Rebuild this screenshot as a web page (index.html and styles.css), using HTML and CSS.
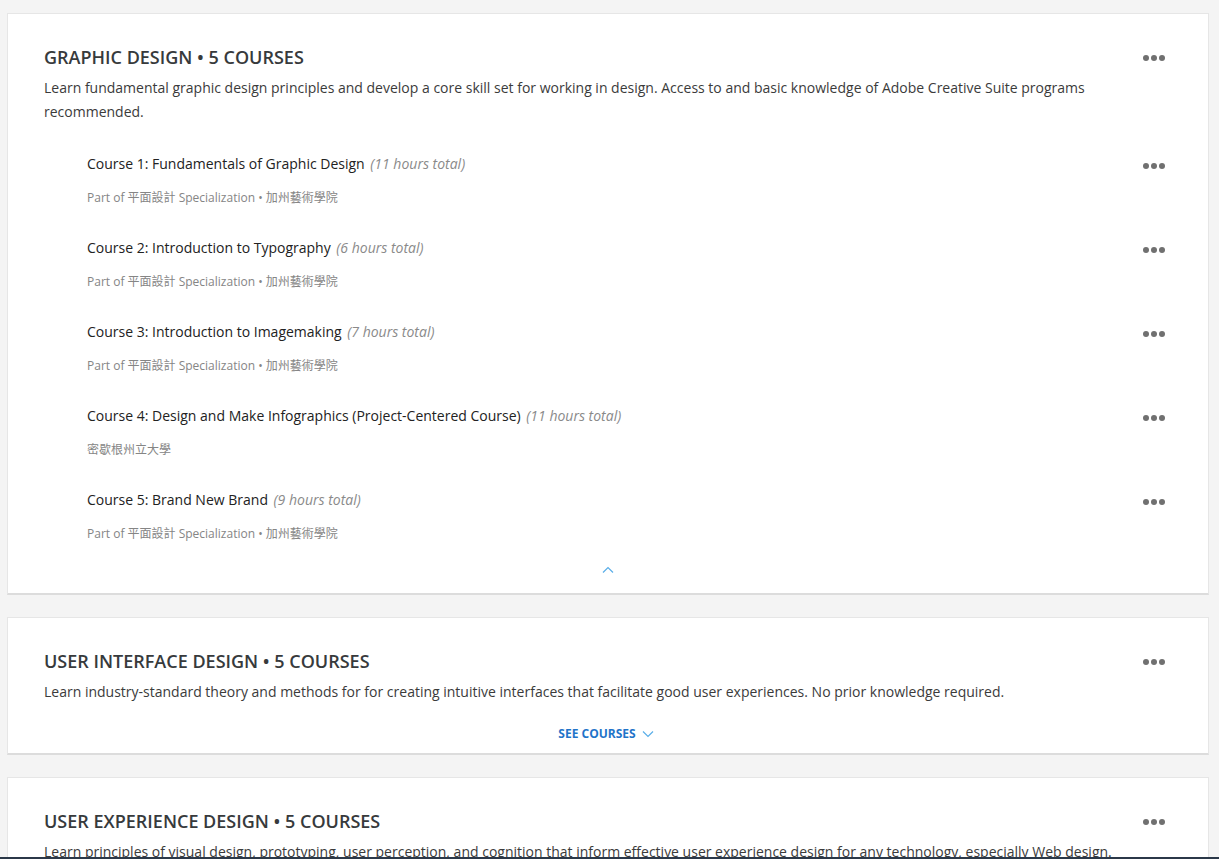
FILE: index.html
```html
<!DOCTYPE html>
<html lang="en">
<head>
<meta charset="utf-8">
<title>Courses</title>
<link rel="stylesheet" href="styles.css">
</head>
<body>
<main class="page">
  <section class="card">
    <div class="card-head">
      <div class="head-text">
        <h2 class="title">GRAPHIC DESIGN • 5 COURSES</h2>
        <p class="desc">Learn fundamental graphic design principles and develop a core skill set for working in design. Access to and basic knowledge of Adobe Creative Suite programs recommended.</p>
      </div>
      <button class="more" aria-label="More"><span></span><span></span><span></span></button>
    </div>
    <ul class="courses">
      <li class="course">
        <div class="course-text">
          <div class="course-title">Course 1: Fundamentals of Graphic Design <em class="hours">(11 hours total)</em></div>
          <div class="course-sub">Part of 平面設計 Specialization • 加州藝術學院</div>
        </div>
        <button class="more" aria-label="More"><span></span><span></span><span></span></button>
      </li>
      <li class="course">
        <div class="course-text">
          <div class="course-title">Course 2: Introduction to Typography <em class="hours">(6 hours total)</em></div>
          <div class="course-sub">Part of 平面設計 Specialization • 加州藝術學院</div>
        </div>
        <button class="more" aria-label="More"><span></span><span></span><span></span></button>
      </li>
      <li class="course">
        <div class="course-text">
          <div class="course-title">Course 3: Introduction to Imagemaking <em class="hours">(7 hours total)</em></div>
          <div class="course-sub">Part of 平面設計 Specialization • 加州藝術學院</div>
        </div>
        <button class="more" aria-label="More"><span></span><span></span><span></span></button>
      </li>
      <li class="course">
        <div class="course-text">
          <div class="course-title">Course 4: Design and Make Infographics (Project-Centered Course) <em class="hours">(11 hours total)</em></div>
          <div class="course-sub">密歇根州立大學</div>
        </div>
        <button class="more" aria-label="More"><span></span><span></span><span></span></button>
      </li>
      <li class="course">
        <div class="course-text">
          <div class="course-title">Course 5: Brand New Brand <em class="hours">(9 hours total)</em></div>
          <div class="course-sub">Part of 平面設計 Specialization • 加州藝術學院</div>
        </div>
        <button class="more" aria-label="More"><span></span><span></span><span></span></button>
      </li>
    </ul>
    <div class="toggle">
      <svg class="chev" width="12" height="7" viewBox="0 0 12 7"><path d="M1 6.5 L6 1.5 L11 6.5" fill="none" stroke="#5aaee8" stroke-width="1.2"/></svg>
    </div>
  </section>

  <section class="card">
    <div class="card-head">
      <div class="head-text">
        <h2 class="title">USER INTERFACE DESIGN • 5 COURSES</h2>
        <p class="desc">Learn industry-standard theory and methods for for creating intuitive interfaces that facilitate good user experiences. No prior knowledge required.</p>
      </div>
      <button class="more" aria-label="More"><span></span><span></span><span></span></button>
    </div>
    <div class="toggle see">
      <a class="see-link" href="#">SEE COURSES</a>
      <svg class="chev-down" width="12" height="7" viewBox="0 0 12 7"><path d="M1 0.5 L6 5.5 L11 0.5" fill="none" stroke="#5aaee8" stroke-width="1.2"/></svg>
    </div>
  </section>

  <section class="card">
    <div class="card-head">
      <div class="head-text">
        <h2 class="title">USER EXPERIENCE DESIGN • 5 COURSES</h2>
        <p class="desc">Learn principles of visual design, prototyping, user perception, and cognition that inform effective user experience design for any technology, especially Web design.</p>
      </div>
      <button class="more" aria-label="More"><span></span><span></span><span></span></button>
    </div>
  </section>
</main>
<div class="bottom-bar"></div>
</body>
</html>
```
FILE: styles.css
```css
* { box-sizing: border-box; }
html, body { margin: 0; padding: 0; }
body {
  background: #f4f4f4;
  font-family: "Open Sans", "Noto Sans CJK TC", sans-serif;
  color: #333;
  overflow: hidden;
  height: 859px;
}
.page {
  padding: 13px 10px 0 7px;
  display: flex;
  flex-direction: column;
  gap: 22px;
}
.card {
  background: #fff;
  border: 1px solid #e6e6e6;
  border-bottom: 2px solid #dcdcdc;
  padding: 31px 43px 0 36px;
}
.card-head {
  display: flex;
  align-items: flex-start;
  gap: 16px;
}
.head-text { flex: 1; }
.title {
  margin: 0;
  font-size: 18px;
  line-height: 24px;
  font-weight: 600;
  color: #373a3c;
  letter-spacing: 0;
}
.desc {
  margin: 7px 0 0;
  font-size: 14px;
  line-height: 24px;
  color: #3b3b3b;
  max-width: 1070px;
}
.more {
  border: 0;
  background: none;
  padding: 0;
  margin-top: 10px;
  display: flex;
  gap: 2px;
  cursor: pointer;
}
.more span {
  width: 6px;
  height: 6px;
  border-radius: 50%;
  background: #707070;
}
.courses {
  list-style: none;
  margin: 30px 0 0;
  padding: 0 0 0 43px;
  display: flex;
  flex-direction: column;
  gap: 31px;
}
.course {
  display: flex;
  align-items: flex-start;
  justify-content: space-between;
}
.course .more { margin-top: 9px; }
.course-title {
  font-size: 14px;
  line-height: 20px;
  color: #222;
}
.hours {
  color: #8a8a8a;
  margin-left: 2px;
}
.course-sub {
  margin-top: 15px;
  font-size: 12px;
  line-height: 18px;
  color: #858585;
}
.toggle {
  display: flex;
  justify-content: center;
  align-items: center;
  margin: 0 -43px 0 -36px;
  padding: 23px 0 20px;
}
.chev { display: block; }
.see {
  padding: 21px 4px 10px 0;
  gap: 6px;
}
.see-link {
  font-size: 12px;
  line-height: 18px;
  font-weight: 700;
  color: #1f74c9;
  text-decoration: none;
}
.chev-down { display: block; }
.bottom-bar {
  position: fixed;
  left: 0;
  right: 0;
  bottom: 0;
  height: 2px;
  background: #2b3848;
}
```
